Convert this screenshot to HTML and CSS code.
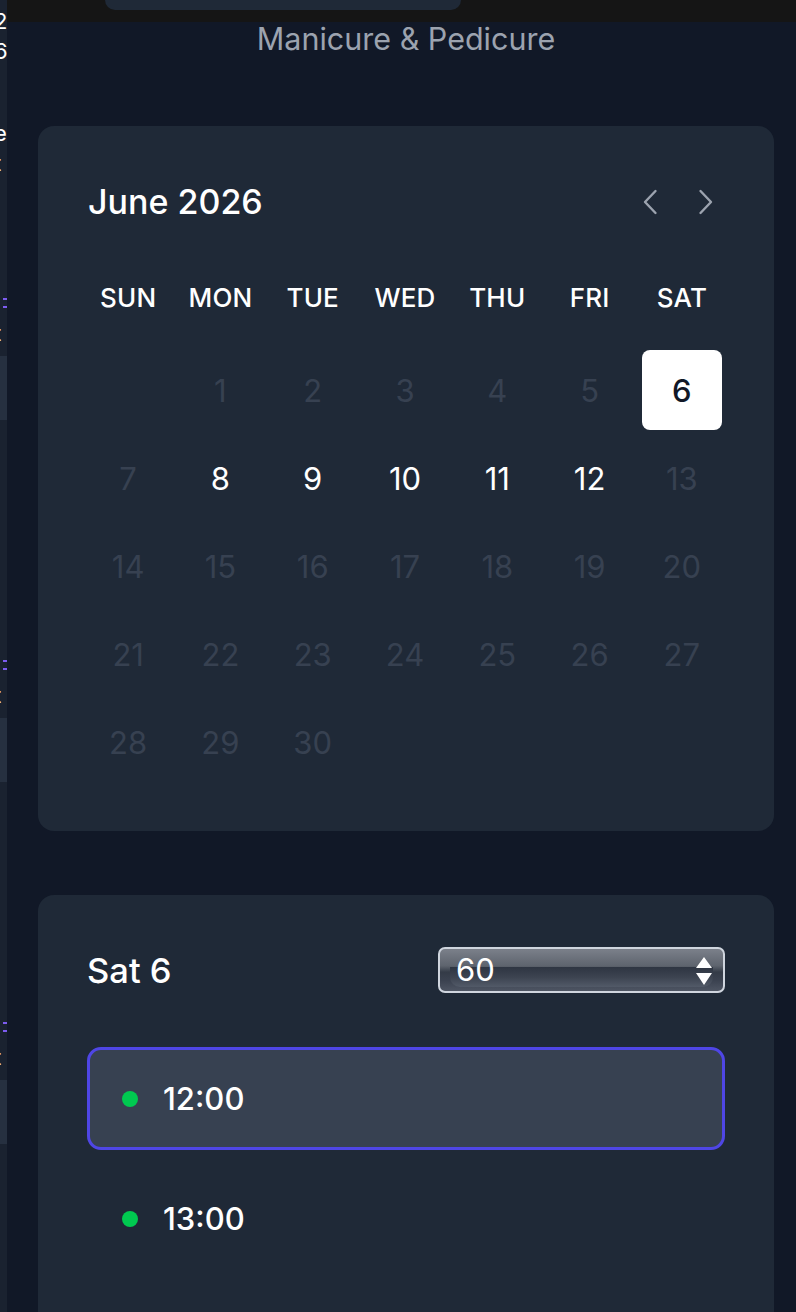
FILE: index.html
```html
<!DOCTYPE html>
<html>
<head>
<meta charset="utf-8">
<link rel="stylesheet" href="styles.css">
</head>
<body>
<div class="page">
  <aside class="strip">
    <span class="frag f1">2</span>
    <span class="frag">6</span>
    <span class="frag">:</span>
    <span class="frag f2">e</span>
    <span class="frag">t</span>
    <span class="dash d1"></span><span class="dash"></span>
    <span class="frag f3">t</span>
    <span class="box"></span>
    <span class="dash d2"></span><span class="dash"></span>
    <span class="frag f3">t</span>
    <span class="box"></span>
    <span class="dash d2"></span><span class="dash"></span>
    <span class="frag f3">t</span>
    <span class="box"></span>
    <span class="dash d2"></span><span class="dash"></span>
    <span class="frag f3">t</span>
  </aside>
  <main class="main">
    <div class="topbar"><div class="topbar-pill"></div></div>
    <div class="content">
      <h2 class="service">Manicure &amp; Pedicure</h2>

      <section class="card calendar">
        <div class="cal-head">
          <h3 class="month">June 2026</h3>
          <div class="nav">
            <button class="nav-btn" aria-label="Previous month">
              <svg viewBox="0 0 16 28" width="16" height="28"><path d="M13.5 3 3 14l10.5 11" fill="none" stroke="#9ca3af" stroke-width="2.4" stroke-linecap="round" stroke-linejoin="round"/></svg>
            </button>
            <button class="nav-btn" aria-label="Next month">
              <svg viewBox="0 0 16 28" width="16" height="28"><path d="M2.5 3 13 14 2.5 25" fill="none" stroke="#9ca3af" stroke-width="2.4" stroke-linecap="round" stroke-linejoin="round"/></svg>
            </button>
          </div>
        </div>
        <div class="weekdays">
          <span>SUN</span><span>MON</span><span>TUE</span><span>WED</span><span>THU</span><span>FRI</span><span>SAT</span>
        </div>
        <div class="days">
          <span class="day empty"></span>
          <span class="day off">1</span>
          <span class="day off">2</span>
          <span class="day off">3</span>
          <span class="day off">4</span>
          <span class="day off">5</span>
          <span class="day selected">6</span>
          <span class="day off">7</span>
          <span class="day on">8</span>
          <span class="day on">9</span>
          <span class="day on">10</span>
          <span class="day on">11</span>
          <span class="day on">12</span>
          <span class="day off">13</span>
          <span class="day off">14</span>
          <span class="day off">15</span>
          <span class="day off">16</span>
          <span class="day off">17</span>
          <span class="day off">18</span>
          <span class="day off">19</span>
          <span class="day off">20</span>
          <span class="day off">21</span>
          <span class="day off">22</span>
          <span class="day off">23</span>
          <span class="day off">24</span>
          <span class="day off">25</span>
          <span class="day off">26</span>
          <span class="day off">27</span>
          <span class="day off">28</span>
          <span class="day off">29</span>
          <span class="day off">30</span>
        </div>
      </section>

      <section class="card slots">
        <div class="slots-head">
          <h3 class="dayname">Sat 6</h3>
          <div class="select">
            <div class="select-inner"></div>
            <span class="select-value">60</span>
            <span class="select-arrows">
              <svg viewBox="0 0 18 32" width="18" height="32"><path d="M9 2 17 13H1Z M1 18H17L9 30Z" fill="#fff"/></svg>
            </span>
          </div>
        </div>
        <div class="slot active"><span class="dot"></span><span class="time">12:00</span></div>
        <div class="slot"><span class="dot"></span><span class="time">13:00</span></div>
      </section>
    </div>
  </main>
</div>
</body>
</html>
```

FILE: styles.css
```css
* { box-sizing: border-box; }
html, body { margin: 0; padding: 0; }
body {
  background: #111827;
  font-family: Inter, "Noto Sans", "Liberation Sans", sans-serif;
  color: #fff;
  overflow: hidden;
  height: 1312px;
}
.page {
  display: flex;
  height: 1312px;
}
.strip {
  width: 7px;
  flex: 0 0 7px;
  background: #1a2230;
  display: flex;
  flex-direction: column;
  overflow: hidden;
  color: #fff;
  font-size: 22px;
  line-height: 30px;
}
.frag { display: block; margin-left: -6px; height: 30px; flex-shrink: 0; }
.f1 { margin-top: 6px; }
.f2 { margin-top: 22px; }
.f3 { margin-top: 10px; }
.dash {
  display: block;
  flex-shrink: 0;
  width: 4px;
  height: 2px;
  background: #7c5cf0;
  margin-top: 6px;
  margin-left: 3px;
}
.d1 { margin-top: 120px; }
.d2 { margin-top: 240px; }
.box {
  display: block;
  flex-shrink: 0;
  height: 64px;
  margin-top: 8px;
  background: #263040;
}
.main {
  flex: 1;
  display: flex;
  flex-direction: column;
  min-width: 0;
}
.topbar {
  flex-shrink: 0;
  height: 22px;
  background: #151515;
  padding-left: 98px;
}
.topbar-pill {
  width: 356px;
  height: 10px;
  background: #1f2937;
  border-radius: 0 0 14px 14px;
}
.content {
  padding: 0 22px 0 31px;
  display: flex;
  flex-direction: column;
  flex-shrink: 0;
}
.service {
  margin: 0;
  text-align: center;
  font-weight: 400;
  font-size: 30.5px;
  line-height: 34px;
  color: #9ca3af;
  height: 104px;
  flex-shrink: 0;
}
.card {
  background: #1f2937;
  border-radius: 16px;
  width: 736px;
  flex-shrink: 0;
}
.calendar {
  padding: 56px 52px 49px 50px;
  margin-bottom: 64px;
}
.cal-head {
  display: flex;
  align-items: center;
  justify-content: space-between;
  height: 40px;
}
.month {
  margin: 0;
  font-size: 34px;
  font-weight: 500;
  line-height: 40px;
}
.nav { display: flex; gap: 40px; margin-right: 8px; }
.nav-btn {
  background: none;
  border: 0;
  padding: 0;
  width: 16px;
  height: 28px;
  display: flex;
  align-items: center;
  justify-content: center;
}
.weekdays {
  margin-top: 60px;
  display: grid;
  grid-template-columns: repeat(7, 1fr);
  column-gap: 12px;
  font-size: 26px;
  font-weight: 500;
  line-height: 32px;
  text-align: center;
  letter-spacing: 0.2px;
}
.days {
  margin-top: 36px;
  display: grid;
  grid-template-columns: repeat(7, 1fr);
  column-gap: 12px;
  row-gap: 8px;
}
.day {
  height: 80px;
  display: flex;
  align-items: center;
  justify-content: center;
  font-size: 31px;
  border-radius: 8px;
}
.off { color: #374151; }
.on { color: #fff; }
.selected {
  background: #fff;
  color: #111827;
  font-weight: 500;
}
.slots {
  padding: 52px 49px 40px;
  min-height: 430px;
}
.slots-head {
  display: flex;
  align-items: center;
  justify-content: space-between;
  height: 46px;
  margin-bottom: 54px;
}
.dayname {
  margin: 0;
  font-size: 34.5px;
  font-weight: 500;
}
.select {
  position: relative;
  width: 287px;
  height: 46px;
  border: 2px solid #cfd5de;
  border-radius: 7px;
  background: linear-gradient(#7b808a 0%, #5e646e 40%, #343b47 55%, #3b4250 75%, #4e5563 100%);
  display: flex;
  align-items: center;
  padding: 0 10px 0 16px;
  overflow: hidden;
}
.select-inner {
  position: absolute;
  left: 10px;
  right: 10px;
  top: 18px;
  bottom: 4px;
  border-radius: 0 0 10px 10px;
  background: linear-gradient(#2e3542 0%, #3c4350 50%, #525a68 100%);
}
.select-value {
  position: relative;
  font-size: 31px;
  line-height: 40px;
  flex: 1;
}
.select-arrows { position: relative; display: flex; margin-top: 2px; }
.slot {
  height: 103px;
  border-radius: 14px;
  display: flex;
  align-items: center;
  padding-left: 32px;
  margin-bottom: 17px;
  border: 3px solid transparent;
}
.slot.active {
  background: #374151;
  border-color: #4f46e5;
}
.dot {
  width: 16px;
  height: 16px;
  border-radius: 50%;
  background: #00c950;
  margin-right: 25px;
}
.time {
  font-size: 31px;
  font-weight: 500;
}
```
